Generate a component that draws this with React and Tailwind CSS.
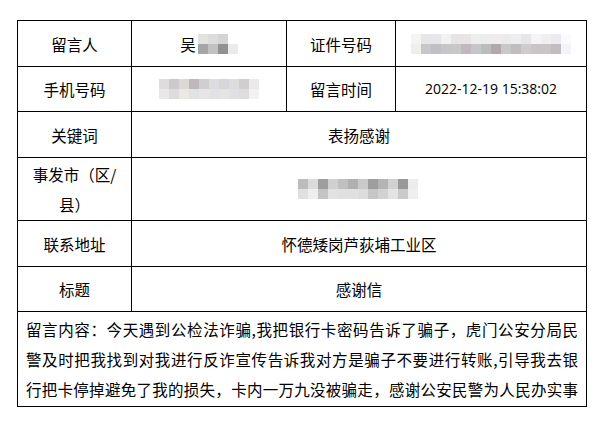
import React from 'react';

// pixelated (blurred-out) personal info
const nameBlur = [
  ['bg-[#e2e2e2]', 'bg-[#dcdcdc]', 'bg-[#d4d4d4]', 'bg-white'],
  ['bg-[#a6a6a6]', 'bg-[#c2c2c2]', 'bg-[#929292]', 'bg-[#ebebeb]'],
];
const phoneBlur = [
  ['bg-[#dedcdc]', 'bg-[#cccacc]', 'bg-[#dcd8d4]', 'bg-[#bcb8bc]', 'bg-[#d0ced0]', 'bg-[#dcdce0]', 'bg-[#d8d6d8]', 'bg-[#dcdcdc]', 'bg-[#d0ced0]', 'bg-[#eaeaea]'],
  ['bg-[#e8e8e8]', 'bg-[#dcdcdc]', 'bg-[#ece8e4]', 'bg-[#e0e2e4]', 'bg-[#e8e6e4]', 'bg-[#e2e2e6]', 'bg-[#e6e4e2]', 'bg-[#e0e0e4]', 'bg-[#dedcdc]', 'bg-[#f2f2f2]'],
];
const idBlur = [
  ['bg-[#f4f4f2]', 'bg-[#e6e6e8]', 'bg-[#e8e6e8]', 'bg-[#f2f2f2]', 'bg-[#e6e4e6]', 'bg-[#e8e4e6]', 'bg-[#eeeeee]', 'bg-[#ececec]', 'bg-[#eeecec]', 'bg-[#ecebec]', 'bg-[#eeeeee]', 'bg-[#e6e6ea]', 'bg-[#f4f4f4]', 'bg-[#f0eeee]', 'bg-[#eceaee]', 'bg-[#fafafc]'],
  ['bg-[#eeeeec]', 'bg-[#c8c6ca]', 'bg-[#c0c0c4]', 'bg-[#c6c6c6]', 'bg-[#c8c8c8]', 'bg-[#c0b8bc]', 'bg-[#c6c6ca]', 'bg-[#bcbcbc]', 'bg-[#b0a8ac]', 'bg-[#c8c8c8]', 'bg-[#c0bcc0]', 'bg-[#cccccc]', 'bg-[#c8c4c8]', 'bg-[#c8c4c8]', 'bg-[#c0bcc0]', 'bg-[#f4f4f8]'],
];
const areaBlur = [
  ['bg-[#bcbcbc]', 'bg-[#dadada]', 'bg-[#9e9e9e]', 'bg-[#d0d0d0]', 'bg-[#c0c0c0]', 'bg-[#b0b0b0]', 'bg-[#cacaca]', 'bg-[#9e9e9e]', 'bg-[#b4b4b4]', 'bg-[#d0d0d0]', 'bg-[#989898]', 'bg-[#ececec]'],
  ['bg-[#e0e0e0]', 'bg-[#eeeeee]', 'bg-[#c4c4c4]', 'bg-[#e2e2e2]', 'bg-[#e0e0e0]', 'bg-[#e0e0e0]', 'bg-[#dcdcdc]', 'bg-[#c6c6c6]', 'bg-[#d2d2d2]', 'bg-[#e4e4e4]', 'bg-[#cacaca]', 'bg-[#efefef]'],
];

function Mosaic({ rows }) {
  return (
    <div className="flex flex-col">
      {rows.map((row, i) => (
        <div key={i} className="flex">
          {row.map((c, j) => (
            <div key={j} className={`w-[10px] h-[10px] ${c}`} />
          ))}
        </div>
      ))}
    </div>
  );
}

const cell = 'border-r border-b border-black flex items-center justify-center text-center';

const lines = [
  '留言内容：今天遇到公检法诈骗,我把银行卡密码告诉了骗子，虎门公安分局民',
  '警及时把我找到对我进行反诈宣传告诉我对方是骗子不要进行转账,引导我去银',
  '行把卡停掉避免了我的损失，卡内一万九没被骗走，感谢公安民警为人民办实事',
];

export default function App() {
  return (
    <div className="w-[606px] h-[427px] bg-white pt-[20px] pl-[17px] text-black font-['Noto_Sans_CJK_SC','Noto_Sans',sans-serif] text-[15.5px] leading-[30px]">
      <div className="w-[570px] grid grid-cols-[114px_155px_109px_191px] grid-rows-[46px_45px_46px_63px_46px_45px_95px] border-l border-t border-black">
        <div className={cell}>留言人</div>
        <div className={cell}>
          <div className="flex items-center gap-[2px]">
            <span>吴</span>
            <Mosaic rows={nameBlur} />
          </div>
        </div>
        <div className={cell}>证件号码</div>
        <div className={cell}>
          <Mosaic rows={idBlur} />
        </div>

        <div className={cell}>手机号码</div>
        <div className={cell}>
          <Mosaic rows={phoneBlur} />
        </div>
        <div className={cell}>留言时间</div>
        <div className={`${cell} font-['Open_Sans',sans-serif] text-[14px]`}>2022-12-19 15:38:02</div>

        <div className={cell}>关键词</div>
        <div className={`${cell} col-span-3`}>表扬感谢</div>

        <div className={cell}>
          <span>
            事发市（区/
            <br />
            县）
          </span>
        </div>
        <div className={`${cell} col-span-3 pr-[2px]`}>
          <Mosaic rows={areaBlur} />
        </div>

        <div className={cell}>联系地址</div>
        <div className={`${cell} col-span-3`}>怀德矮岗芦荻埔工业区</div>

        <div className={cell}>标题</div>
        <div className={`${cell} col-span-3`}>感谢信</div>

        <div className="col-span-4 border-r border-b border-black px-2 pt-[2px] overflow-hidden">
          {lines.map((l, i) => (
            <div key={i} className="whitespace-nowrap text-justify [text-align-last:justify]">
              {l}
            </div>
          ))}
        </div>
      </div>
    </div>
  );
}
